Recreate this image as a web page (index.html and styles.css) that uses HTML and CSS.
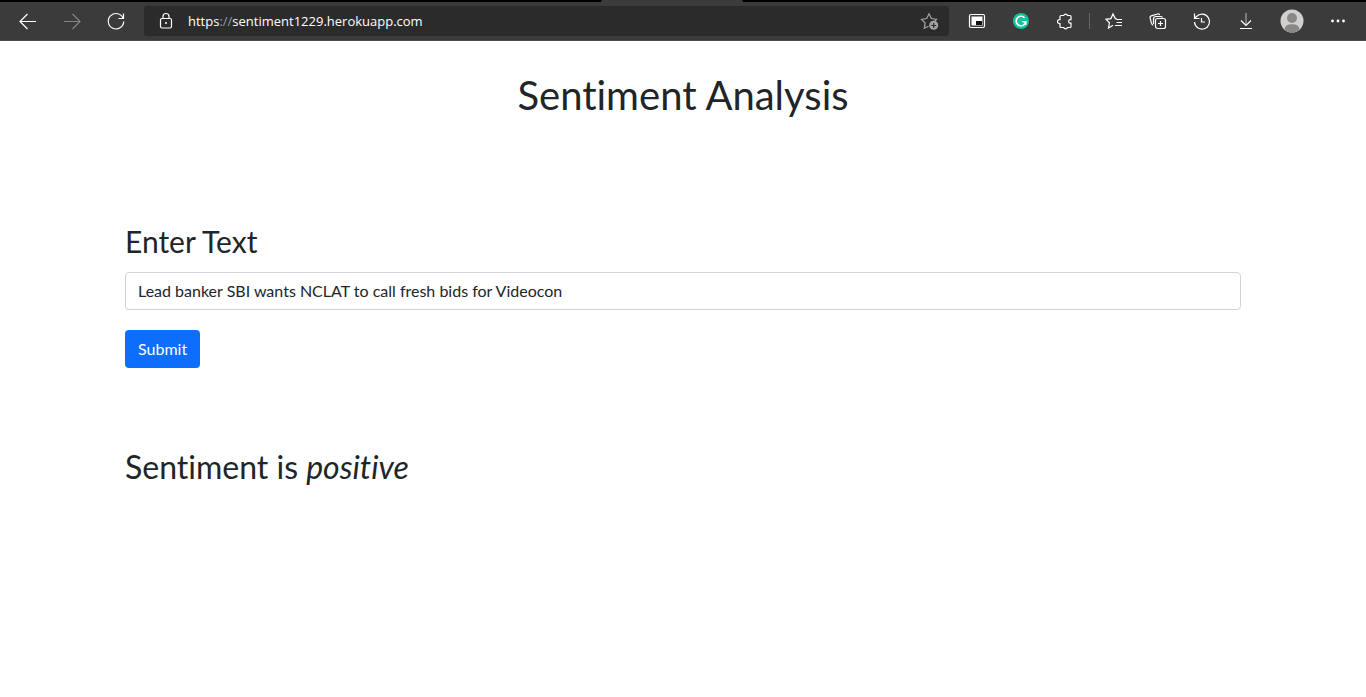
FILE: index.html
```html
<!DOCTYPE html>
<html lang="en">
<head>
<meta charset="utf-8">
<title>Sentiment Analysis</title>
<link rel="stylesheet" href="styles.css">
</head>
<body>
<header class="browser">
  <div class="tab-strip"><span class="active-tab"></span></div>
  <div class="toolbar">
    <button class="tool" aria-label="Back"><svg class="icon" viewBox="0 0 20 20"><path d="M18 10.500H2.500M9.500 3 2 10.500l7.500 7.500"/></svg></button>
    <button class="tool disabled" aria-label="Forward"><svg class="icon" viewBox="0 0 20 20"><path d="M2 10.500h15.500M10.500 3l7.500 7.500-7.500 7.500"/></svg></button>
    <button class="tool" aria-label="Refresh"><svg class="icon" viewBox="0 0 20 20"><path d="M17.200 7.500A7.700 7.700 0 1 0 17.700 10.500M17.500 2.500v5h-5"/></svg></button>
    <div class="address">
      <svg class="icon lock" viewBox="0 0 20 20"><rect x="4.500" y="7.500" width="11" height="9.500" rx="1.500"/><path d="M7 7.500V5.500a3 3 0 0 1 6 0v2"/><circle class="solid" cx="10" cy="12" r="1"/></svg>
      <span class="url">https<span class="dim">://</span>sentiment1229.herokuapp.com</span>
      <button class="favorite" aria-label="Add to favorites"><svg class="icon" viewBox="0 0 20 20"><path d="M8.500 15.200 4.300 17.300 5.100 12 1.500 8.300l5.200-.8L9 2.800l2.400 4.700 5.100.8-1.700 1.700"/><circle class="solid" cx="13.700" cy="14.300" r="4.500"/><path class="cut" d="M11.200 14.500h5M13.700 12v5"/></svg></button>
    </div>
    <button class="tool" aria-label="Picture in picture"><svg class="icon" viewBox="0 0 20 20"><rect x="2.500" y="3.500" width="15" height="13" rx="1.500"/><path class="solid" d="M4.500 5.500h11v9h-11z"/><path class="black" d="M9 10h6v4H9z"/></svg></button>
    <button class="tool" aria-label="Grammarly"><svg class="icon" viewBox="0 0 20 20"><circle class="green" cx="10" cy="10" r="8"/><path class="letter" d="M13.500 6.700a4.800 4.800 0 1 0 1.300 4h-3.500M14.800 10.700v3"/></svg></button>
    <button class="tool" aria-label="Extensions"><svg class="icon" viewBox="0 0 20 20"><path d="M6 4.500h2.700a2 2 0 0 1 3.800 0H15q1 0 1 1v3.200h-.7a1.700 1.700 0 0 0 0 3.400h.7v3.400q0 1-1 1h-2.500a2 2 0 0 1-3.800 0H6q-1 0-1-1v-3H4.400a1.900 1.900 0 0 1 0-3.800H5V5.500q0-1 1-1z"/></svg></button>
    <span class="divider"></span>
    <button class="tool" aria-label="Favorites"><svg class="icon" viewBox="0 0 20 20"><path d="M9 14.300 4.500 17l.9-5.200L2 8.300l4.900-.7L9 3l2.300 4.600 1.500.3M12.500 8.500H18M12.500 11.500H18M11 14.500h7"/></svg></button>
    <button class="tool" aria-label="Collections"><svg class="icon" viewBox="0 0 20 20"><rect x="7.500" y="7.500" width="10" height="10" rx="2"/><path d="M12.500 10v5M10 12.500h5M5.200 14.200c-1-.4-1.500-1-1.800-2L2.100 6.900c-.3-1 .2-1.700 1.100-2l6.400-1.900c1-.3 1.800.1 2.100 1M5.500 13V8q0-2.500 2.500-2.500h4.500q1.500 0 2 1"/></svg></button>
    <button class="tool" aria-label="History"><svg class="icon" viewBox="0 0 20 20"><path d="M2.500 11a7.500 7.500 0 1 0 2-5.500L2.500 7.300M2.500 2.500v5h5M9.500 7v4H13"/></svg></button>
    <button class="tool" aria-label="Downloads"><svg class="icon" viewBox="0 0 20 20"><path class="muted" d="M10 2v12"/><path d="M5 9.500l5 5 5-5M4 17.500h12"/></svg></button>
    <button class="tool profile" aria-label="Profile"><svg class="avatar" viewBox="0 0 24 24"><circle class="disc" cx="12" cy="12" r="11.500"/><circle class="person" cx="12" cy="9" r="5"/><path class="person" d="M4.500 20.500C5 16.500 8 15.300 12 15.300s7 1.200 7.500 5.200C15 24.500 9 24.500 4.500 20.500z"/></svg></button>
    <button class="tool more" aria-label="Settings and more"><svg class="icon" viewBox="0 0 20 20"><circle class="solid" cx="4.500" cy="10" r="1.400"/><circle class="solid" cx="10" cy="10" r="1.400"/><circle class="solid" cx="15.500" cy="10" r="1.400"/></svg></button>
  </div>
</header>
<main class="container">
  <h1 class="title">Sentiment Analysis</h1>
  <form class="form">
    <label class="label" for="text">Enter Text</label>
    <input class="field" id="text" type="text" value="Lead banker SBI wants NCLAT to call fresh bids for Videocon">
    <button class="submit" type="button">Submit</button>
  </form>
  <h2 class="result">Sentiment is <em class="verdict">positive</em></h2>
</main>
</body>
</html>
```
FILE: styles.css
```css
* {
  box-sizing: border-box;
}

body {
  margin: 0;
  background: #fff;
  color: #212529;
  font: 16px/24px Lato, sans-serif;
  font-variant-ligatures: none;
}

button {
  border: 0;
  font: inherit;
}

.browser {
  background: #3b3b3b;
  border-bottom: 1px solid #505050;
}

.tab-strip {
  display: flex;
  justify-content: center;
  height: 2px;
  background: #000;
}

.active-tab {
  width: 142px;
  margin-right: 22px;
  background: #3b3b3b;
  border-radius: 2px 2px 0 0;
}

.toolbar {
  display: flex;
  align-items: center;
  height: 38px;
  padding: 0 6px;
}

.tool {
  display: flex;
  flex: none;
  align-items: center;
  justify-content: center;
  width: 44px;
  height: 30px;
  padding: 0;
  background: none;
  color: #fff;
}

.disabled {
  color: #858585;
}

.icon {
  display: block;
  width: 20px;
  height: 20px;
  fill: none;
  stroke: currentColor;
  stroke-width: 1.2;
}

.solid {
  fill: currentColor;
  stroke: none;
}

.muted {
  stroke: #a8a8a8;
}

.cut {
  stroke: #2b2b2b;
}

.black {
  fill: #111;
  stroke: none;
}

.green {
  fill: #15c39a;
  stroke: none;
}

.letter {
  stroke-width: 1.6;
}

.address {
  display: flex;
  flex: 1;
  align-items: center;
  height: 30px;
  margin: 0 6px;
  padding: 0 9px 0 12px;
  background: #2b2b2b;
  border-radius: 3px;
  color: #fff;
}

.url {
  flex: 1;
  margin-left: 12px;
  font: 13px/20px "Open Sans", sans-serif;
}

.dim {
  color: #9a9a9a;
}

.favorite {
  padding: 0;
  background: none;
  color: #a3a3a3;
}

.divider {
  width: 1px;
  height: 16px;
  margin: 0 2px;
  background: #666;
}

.profile,
.more {
  margin-left: 2px;
}

.avatar {
  width: 24px;
  height: 24px;
}

.disc {
  fill: #d2d0ce;
}

.person {
  fill: #8a8886;
}

.container {
  max-width: 1140px;
  margin: 0 auto;
  padding: 30px 12px;
}

.title {
  margin: 0;
  font-size: 40px;
  font-weight: 400;
  line-height: 48px;
  text-align: center;
}

.form {
  margin-top: 104px;
}

.label {
  display: block;
  margin-bottom: 13px;
  font-size: 30px;
  line-height: 36px;
}

.field {
  display: block;
  width: 100%;
  height: 38px;
  padding: 5px 12px 7px;
  background: #fff;
  border: 1px solid #ced4da;
  border-radius: 4px;
  color: #212529;
  font: inherit;
}

.submit {
  margin-top: 20px;
  padding: 7px 13px;
  background: #0d6efd;
  border-radius: 4px;
  color: #fff;
}

.result {
  margin: 80px 0 0;
  font-size: 32px;
  font-weight: 400;
  line-height: 38px;
}

.verdict {
  font-style: italic;
}
```
